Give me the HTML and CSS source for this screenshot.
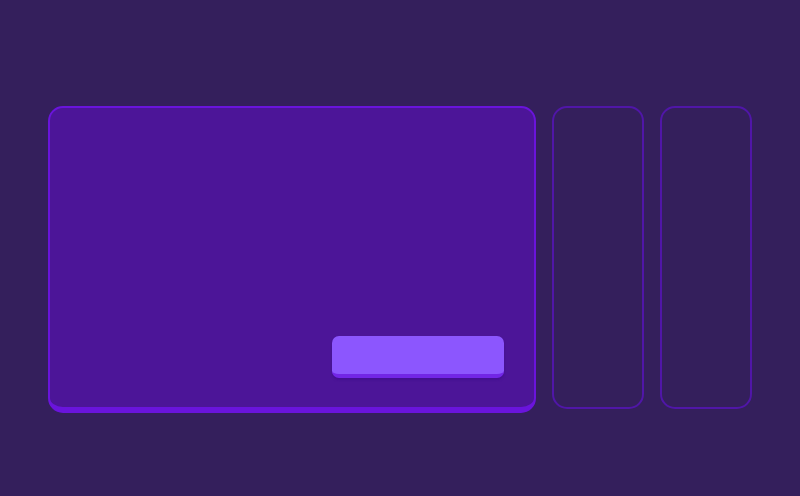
FILE: index.html
```html
<!DOCTYPE html>
<html>
<head>
<meta charset="utf-8">
<link rel="stylesheet" href="styles.css">
</head>
<body>
<div class="stage">
  <div class="card-main">
    <div class="btn"></div>
  </div>
  <div class="card-side"></div>
  <div class="card-side"></div>
</div>
</body>
</html>
```
FILE: styles.css
```css
html, body {
  margin: 0;
  padding: 0;
  background: #341f5c;
  font-family: "Liberation Sans", sans-serif;
}
.stage {
  display: flex;
  align-items: flex-start;
  gap: 16px;
  padding: 106px 0 0 48px;
  width: 800px;
  height: 496px;
  box-sizing: border-box;
}
.card-main {
  box-sizing: border-box;
  width: 488px;
  height: 307px;
  background: #4c1598;
  border: 2px solid #6a14dc;
  border-bottom-width: 6px;
  border-radius: 15px;
  display: flex;
  flex-direction: column;
  justify-content: flex-end;
  align-items: flex-end;
  padding: 0 30px 29px 0;
}
.btn {
  box-sizing: border-box;
  width: 172px;
  height: 42px;
  background: #8c56fe;
  border-bottom: 4px solid #7226e6;
  border-radius: 7px;
  box-shadow: 0 2px 2px rgba(60, 10, 140, 0.5);
}
.card-side {
  box-sizing: border-box;
  width: 92px;
  height: 303px;
  border: 2px solid #5016a8;
  border-radius: 15px;
}
```
